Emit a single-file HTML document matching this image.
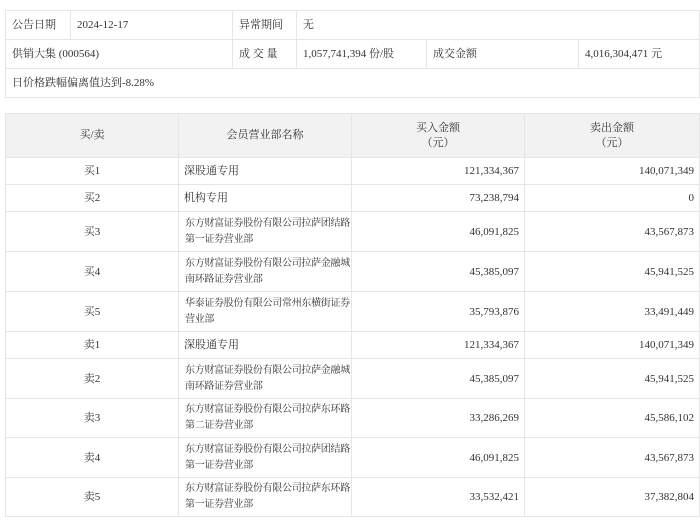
<!DOCTYPE html>
<html><head><meta charset="utf-8"><style>
body{margin:0;width:700px;height:521px;background:#fff;font-family:"Liberation Serif","Noto Serif CJK SC",serif;font-size:11px;color:#333;overflow:hidden;position:relative}
table{border-collapse:collapse;table-layout:fixed;position:absolute;left:5px}
td{border:1px solid #e6e6e6;padding:0 6px;white-space:nowrap;overflow:hidden;line-height:14px}
#t1{top:10px;width:694px}
#t1 td{height:28px}
#t2{top:113px;width:694px}
#t2 th{background:#f2f2f2;border:1px solid #e6e6e6;font-weight:normal;height:43px;padding:0;line-height:15px}
#t2 td{padding:0 5px}
.c{text-align:center}.r{text-align:right}
#t2 td.n{font-size:10px;letter-spacing:-0.3px;line-height:16px;padding:0 3px 0 6px}
.h1 td{height:26px}.h2 td{height:39px}
#t2 tr.s td{height:38px}
</style></head><body>
<table id="t1">
<colgroup><col style="width:65px"><col style="width:162px"><col style="width:64px"><col style="width:130px"><col style="width:152px"><col style="width:121px"></colgroup>
<tr><td>公告日期</td><td>2024-12-17</td><td>异常期间</td><td colspan="3">无</td></tr>
<tr><td colspan="2">供销大集 (000564)</td><td>成 交 量</td><td>1,057,741,394 份/股</td><td>成交金额</td><td>4,016,304,471 元</td></tr>
<tr><td colspan="6">日价格跌幅偏离值达到-8.28%</td></tr>
</table>
<table id="t2">
<colgroup><col style="width:173px"><col style="width:173px"><col style="width:173px"><col style="width:175px"></colgroup>
<tr><th>买/卖</th><th>会员营业部名称</th><th>买入金额<br>（元）</th><th>卖出金额<br>（元）</th></tr>
<tr class="h1"><td class="c">买1</td><td>深股通专用</td><td class="r">121,334,367</td><td class="r">140,071,349</td></tr>
<tr class="h1"><td class="c">买2</td><td>机构专用</td><td class="r">73,238,794</td><td class="r">0</td></tr>
<tr class="h2"><td class="c">买3</td><td class="n">东方财富证券股份有限公司拉萨团结路<br>第一证券营业部</td><td class="r">46,091,825</td><td class="r">43,567,873</td></tr>
<tr class="h2"><td class="c">买4</td><td class="n">东方财富证券股份有限公司拉萨金融城<br>南环路证券营业部</td><td class="r">45,385,097</td><td class="r">45,941,525</td></tr>
<tr class="h2"><td class="c">买5</td><td class="n">华泰证券股份有限公司常州东横街证券<br>营业部</td><td class="r">35,793,876</td><td class="r">33,491,449</td></tr>
<tr class="h1"><td class="c">卖1</td><td>深股通专用</td><td class="r">121,334,367</td><td class="r">140,071,349</td></tr>
<tr class="h2"><td class="c">卖2</td><td class="n">东方财富证券股份有限公司拉萨金融城<br>南环路证券营业部</td><td class="r">45,385,097</td><td class="r">45,941,525</td></tr>
<tr class="h2 s"><td class="c">卖3</td><td class="n">东方财富证券股份有限公司拉萨东环路<br>第二证券营业部</td><td class="r">33,286,269</td><td class="r">45,586,102</td></tr>
<tr class="h2"><td class="c">卖4</td><td class="n">东方财富证券股份有限公司拉萨团结路<br>第一证券营业部</td><td class="r">46,091,825</td><td class="r">43,567,873</td></tr>
<tr class="h2 s"><td class="c">卖5</td><td class="n">东方财富证券股份有限公司拉萨东环路<br>第一证券营业部</td><td class="r">33,532,421</td><td class="r">37,382,804</td></tr>
</table>
</body></html>
